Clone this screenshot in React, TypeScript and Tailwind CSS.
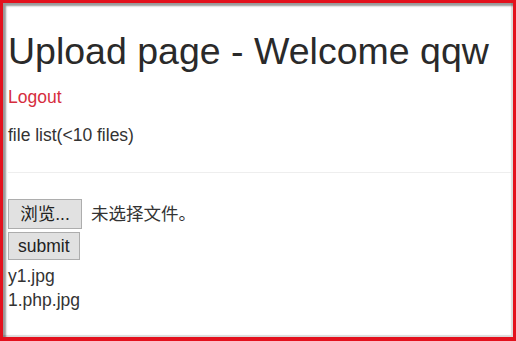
import React from "react";

export default function App() {
  return (
    <div
      className="w-[516px] h-[341px] border-t-[3px] border-l-[3px] border-r-[3px] border-b-[4px] border-[#e3111d] bg-white"
      style={{ fontFamily: '"Liberation Sans", Arial, "Noto Sans CJK SC", sans-serif' }}
    >
      <div className="h-full w-full shadow-[inset_3px_3px_2px_rgba(0,0,0,0.4),inset_-2px_-2px_1px_rgba(0,0,0,0.14)] pl-[5px] pr-[2px] text-[#333] text-[17.5px] leading-[25px]">
        <h1 className="pt-[28px] text-[37.5px] leading-[41px] font-normal text-[#2a2a2a] whitespace-nowrap">
          Upload page - Welcome qqw
        </h1>
        <a className="block mt-[13px] text-[#d62d3d]">Logout</a>
        <p className="mt-[13px]">file list(&lt;10 files)</p>
        <hr className="mt-[24px] border-0 border-t border-[#eeeeee]" />
        <div className="mt-[26px] flex items-center">
          <button className="h-[30px] w-[74px] border border-[#adadad] bg-[#e1e1e1] text-[17.5px] leading-[28px] text-[#222] flex items-center justify-center">
            浏览...
          </button>
          <span className="ml-[9px] text-[17.5px] text-[#333]">未选择文件。</span>
        </div>
        <button className="mt-[3px] h-[28px] px-[9px] border border-[#adadad] bg-[#e1e1e1] text-[17.5px] leading-[26px] text-[#222]">
          submit
        </button>
        <div className="mt-[4px] leading-[24px]">
          <div>y1.jpg</div>
          <div>1.php.jpg</div>
        </div>
      </div>
    </div>
  );
}
